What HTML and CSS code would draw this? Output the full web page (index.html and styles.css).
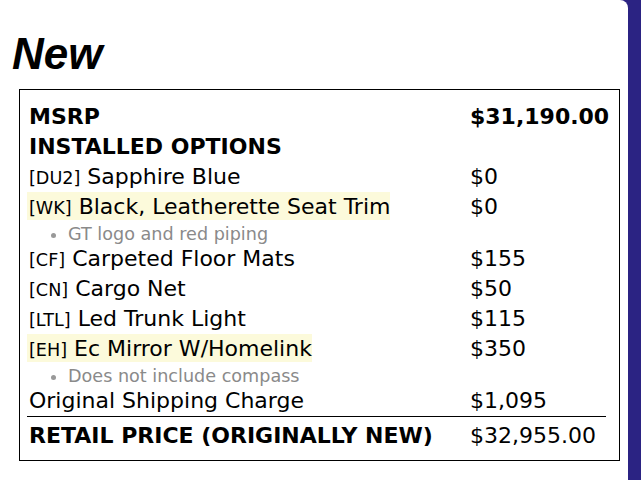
FILE: index.html
```html
<!DOCTYPE html>
<html>
<head>
<meta charset="utf-8">
<link rel="stylesheet" href="styles.css">
</head>
<body>
<div class="page">
  <div class="panel">
    <h1 class="title">New</h1>
    <div class="box">
      <table class="sticker">
        <colgroup><col class="c-label"><col class="c-price"></colgroup>
        <tr class="row head"><td class="label">MSRP</td><td class="price">$31,190.00</td></tr>
        <tr class="row head"><td class="label">INSTALLED OPTIONS</td><td class="price"></td></tr>
        <tr class="row"><td class="label"><span class="code">[DU2]</span> Sapphire Blue</td><td class="price">$0</td></tr>
        <tr class="row"><td class="label"><span class="hl"><span class="code">[WK]</span> Black, Leatherette Seat Trim</span></td><td class="price">$0</td></tr>
        <tr class="sub"><td class="note" colspan="2"><ul><li>GT logo and red piping</li></ul></td></tr>
        <tr class="row"><td class="label"><span class="code">[CF]</span> Carpeted Floor Mats</td><td class="price">$155</td></tr>
        <tr class="row"><td class="label"><span class="code">[CN]</span> Cargo Net</td><td class="price">$50</td></tr>
        <tr class="row"><td class="label"><span class="code">[LTL]</span> Led Trunk Light</td><td class="price">$115</td></tr>
        <tr class="row"><td class="label"><span class="hl"><span class="code">[EH]</span> Ec Mirror W/Homelink</span></td><td class="price">$350</td></tr>
        <tr class="sub"><td class="note" colspan="2"><ul><li>Does not include compass</li></ul></td></tr>
        <tr class="row"><td class="label">Original Shipping Charge</td><td class="price">$1,095</td></tr>
        <tr class="row total"><td class="label">RETAIL PRICE (ORIGINALLY NEW)</td><td class="price">$32,955.00</td></tr>
      </table>
    </div>
  </div>
</div>
</body>
</html>
```

FILE: styles.css
```css
html, body {
  margin: 0;
  padding: 0;
}
body {
  background: #2b2383;
  width: 641px;
  height: 480px;
  overflow: hidden;
}
.page {
  display: flex;
  height: 480px;
}
.panel {
  width: 628px;
  height: 480px;
  background: #ffffff;
  border-top-right-radius: 8px;
  box-sizing: border-box;
}
.title {
  margin: 0;
  padding: 32px 0 0 12px;
  height: 59px;
  box-sizing: border-box;
  font-family: "Liberation Sans", Arial, sans-serif;
  font-weight: bold;
  font-style: italic;
  font-size: 44px;
  line-height: 44px;
  color: #000;
}
.box {
  margin: 30px 0 0 19px;
  width: 601px;
  height: 372px;
  box-sizing: border-box;
  border: 1px solid #000;
  padding: 12px 7px 9px 7px;
}
.sticker {
  width: 579px;
  table-layout: fixed;
  border-collapse: collapse;
  font-family: "DejaVu Sans", sans-serif;
  font-size: 22px;
  color: #000;
}
.c-label {
  width: 441px;
}
.c-price {
  width: 138px;
}
.sticker td {
  padding: 0 2px;
  white-space: nowrap;
  vertical-align: middle;
  overflow: visible;
}
.row td {
  height: 30px;
  line-height: 30px;
}
.head td {
  font-weight: bold;
}
.code {
  font-size: 17.6px;
  line-height: 1;
}
.hl {
  background: #fcfadb;
  padding: 2px 0 1px 2px;
  margin-left: -2px;
  line-height: 1;
}
.sub td {
  height: 19px;
  padding-top: 3px;
  line-height: 19px;
  vertical-align: top;
}
.note ul {
  margin: 0;
  padding: 0 0 0 39px;
  font-size: 17.6px;
  color: #8a8a8a;
}
.note li {
  list-style: disc;
}
.note li::marker {
  font-size: 17.6px;
  color: #999999;
}
.total td {
  border-top: 1px solid #000;
  padding-top: 4px;
  height: 30px;
}
.total .label {
  font-weight: bold;
}
.price {
  text-align: left;
}
```
